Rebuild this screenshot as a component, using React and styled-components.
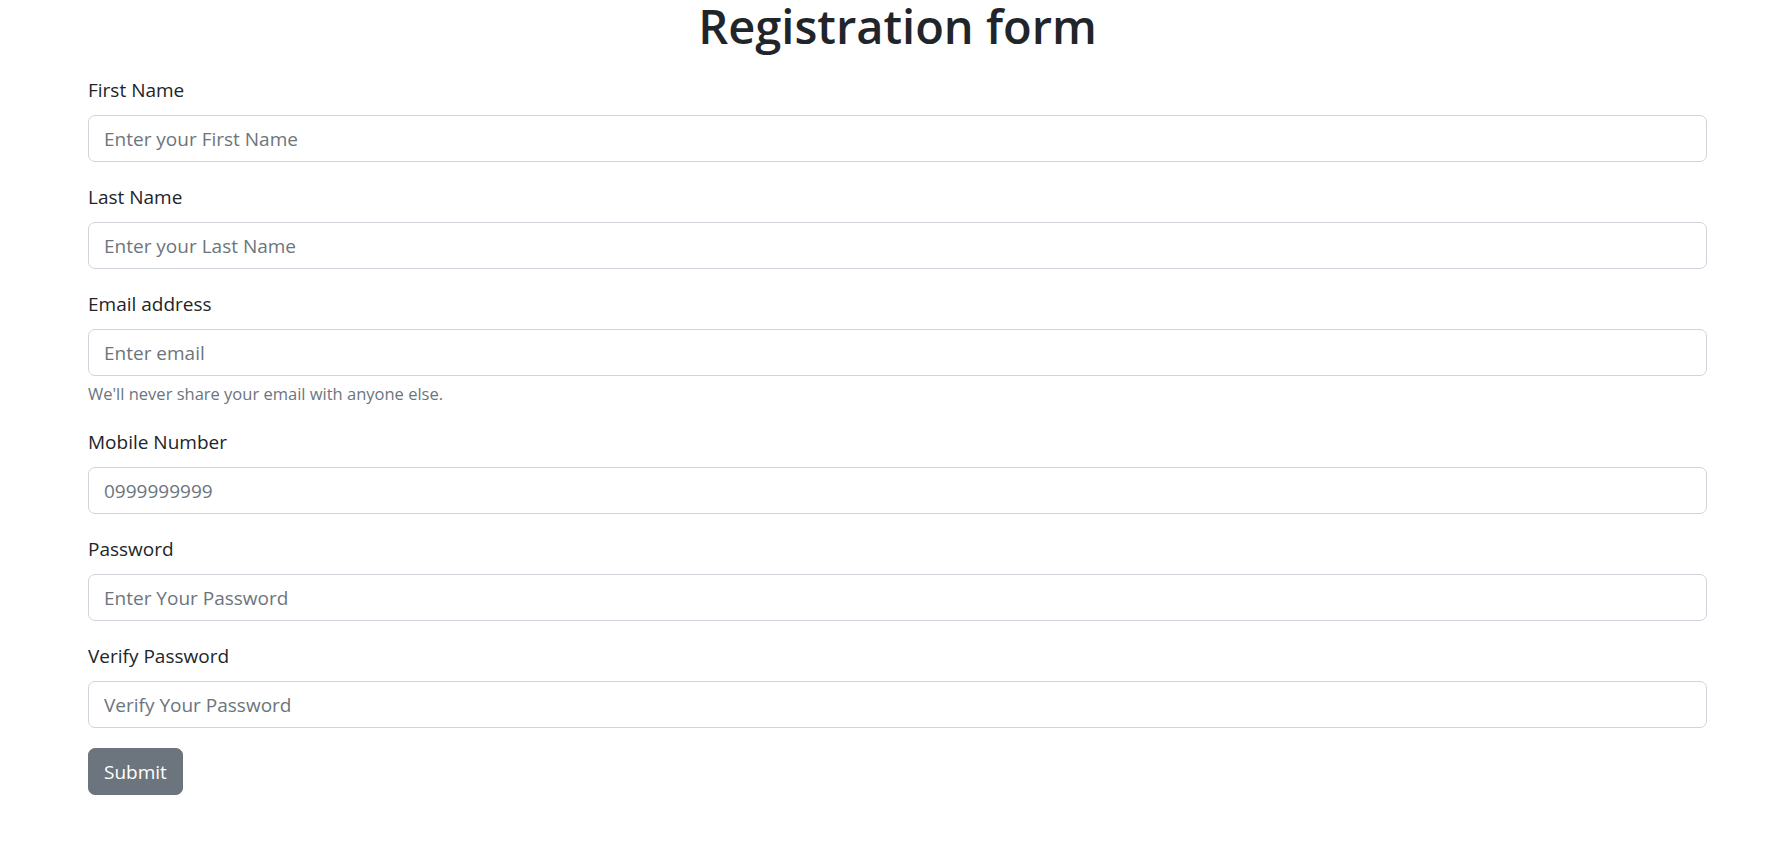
import React from 'react';
import styled, { createGlobalStyle } from 'styled-components';

const GlobalStyle = createGlobalStyle`
  * { box-sizing: border-box; }
  body {
    margin: 0;
    background: #fff;
    color: #212529;
    font-family: 'Open Sans', 'Noto Sans', sans-serif;
  }
`;

const Container = styled.div`
  padding: 0 69px 40px 88px;
`;

const Title = styled.h1`
  margin: 0 0 23px;
  font-size: 47px;
  font-weight: 600;
  line-height: 52px;
  text-align: center;
  color: #212529;
`;

const Form = styled.form`
  display: flex;
  flex-direction: column;
`;

const Group = styled.div`
  display: flex;
  flex-direction: column;
  margin-bottom: 20px;
`;

const Label = styled.label`
  font-size: 19px;
  line-height: 30px;
  margin-bottom: 10px;
  color: #212529;
`;

const Input = styled.input`
  display: block;
  width: 100%;
  height: 47px;
  padding: 7px 15px;
  font-family: inherit;
  font-size: 19px;
  color: #212529;
  background: #fff;
  border: 1px solid #ced4da;
  border-radius: 7px;
  outline: none;

  &::placeholder {
    color: #6c757d;
    opacity: 1;
  }
`;

const Help = styled.small`
  margin-top: 5px;
  font-size: 16.5px;
  line-height: 26px;
  color: #6c757d;
`;

const Button = styled.button`
  align-self: flex-start;
  height: 47px;
  padding: 0 15px;
  font-family: inherit;
  font-size: 19px;
  color: #fff;
  background: #6c757d;
  border: 1px solid #6c757d;
  border-radius: 7px;
  cursor: pointer;
`;

const fields = [
  { id: 'first', label: 'First Name', type: 'text', placeholder: 'Enter your First Name' },
  { id: 'last', label: 'Last Name', type: 'text', placeholder: 'Enter your Last Name' },
  { id: 'email', label: 'Email address', type: 'email', placeholder: 'Enter email', help: "We'll never share your email with anyone else." },
  { id: 'mobile', label: 'Mobile Number', type: 'tel', placeholder: '0999999999' },
  { id: 'password', label: 'Password', type: 'password', placeholder: 'Enter Your Password' },
  { id: 'verify', label: 'Verify Password', type: 'password', placeholder: 'Verify Your Password' },
];

export default function App() {
  return (
    <>
      <GlobalStyle />
      <Container>
        <Title>Registration form</Title>
        <Form onSubmit={(e) => e.preventDefault()}>
          {fields.map((f) => (
            <Group key={f.id}>
              <Label htmlFor={f.id}>{f.label}</Label>
              <Input id={f.id} type={f.type} placeholder={f.placeholder} />
              {f.help && <Help>{f.help}</Help>}
            </Group>
          ))}
          <Button type="submit">Submit</Button>
        </Form>
      </Container>
    </>
  );
}
